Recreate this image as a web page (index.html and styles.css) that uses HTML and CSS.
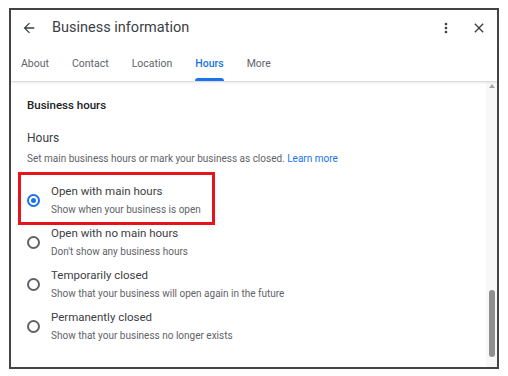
FILE: index.html
```html
<!DOCTYPE html>
<html lang="en">
<head>
    <meta charset="UTF-8">
    <meta name="viewport" content="width=device-width, initial-scale=1.0">
    <title>Business information</title>
    <link rel="stylesheet" href="styles.css">
</head>
<body>
    <div class="dialog">
        <div class="header">
            <button class="icon-btn back" aria-label="Back">
                <svg width="16" height="16" viewBox="0 0 24 24"><path d="M20 11H7.83l5.59-5.59L12 4l-8 8 8 8 1.41-1.41L7.83 13H20v-2z" fill="#3c4043"/></svg>
            </button>
            <div class="title">Business information</div>
            <button class="icon-btn more" aria-label="More options">
                <svg width="16" height="16" viewBox="0 0 24 24"><path d="M12 8c1.1 0 2-.9 2-2s-.9-2-2-2-2 .9-2 2 .9 2 2 2zm0 2c-1.1 0-2 .9-2 2s.9 2 2 2 2-.9 2-2-.9-2-2-2zm0 6c-1.1 0-2 .9-2 2s.9 2 2 2 2-.9 2-2-.9-2-2-2z" fill="#3c4043"/></svg>
            </button>
            <button class="icon-btn close" aria-label="Close">
                <svg width="16" height="16" viewBox="0 0 24 24"><path d="M19 6.41L17.590 5 12 10.59 6.41 5 5 6.41 10.59 12 5 17.59 6.41 19 12 13.41 17.59 19 19 17.59 13.41 12z" fill="#3c4043"/></svg>
            </button>
        </div>
        <div class="tabs">
            <div class="tab">About</div>
            <div class="tab">Contact</div>
            <div class="tab">Location</div>
            <div class="tab active">Hours</div>
            <div class="tab">More</div>
        </div>
        <div class="body">
            <div class="content">
                <div class="section-title">Business hours</div>
                <div class="field-title">Hours</div>
                <div class="desc">Set main business hours or mark your business as closed. <a href="#">Learn more</a></div>
                <div class="options">
                    <div class="option highlighted">
                        <span class="radio checked"></span>
                        <div class="option-text">
                            <div class="option-label">Open with main hours</div>
                            <div class="option-sub">Show when your business is open</div>
                        </div>
                    </div>
                    <div class="option">
                        <span class="radio"></span>
                        <div class="option-text">
                            <div class="option-label">Open with no main hours</div>
                            <div class="option-sub">Don't show any business hours</div>
                        </div>
                    </div>
                    <div class="option">
                        <span class="radio"></span>
                        <div class="option-text">
                            <div class="option-label">Temporarily closed</div>
                            <div class="option-sub">Show that your business will open again in the future</div>
                        </div>
                    </div>
                    <div class="option">
                        <span class="radio"></span>
                        <div class="option-text">
                            <div class="option-label">Permanently closed</div>
                            <div class="option-sub">Show that your business no longer exists</div>
                        </div>
                    </div>
                </div>
            </div>
            <div class="scrollbar">
                <span class="arrow-up"></span>
                <span class="thumb"></span>
            </div>
        </div>
    </div>
</body>
</html>
```

FILE: styles.css
```css
body {
    margin: 0;
    padding: 8px 0 0 9px;
    background: #fff;
    font-family: Roboto, "Noto Sans", Arial, sans-serif;
    color: #3c4043;
}

.dialog {
    width: 486px;
    height: 357px;
    border: 2px solid #444;
    display: flex;
    flex-direction: column;
    background: #fff;
}

.header {
    height: 35px;
    display: flex;
    align-items: center;
    padding: 0 10px 0 10px;
}

.icon-btn {
    width: 16px;
    height: 16px;
    padding: 0;
    border: none;
    background: none;
    display: flex;
    align-items: center;
    justify-content: center;
}

.title {
    flex: 1;
    margin-left: 15px;
    font-size: 14.5px;
    color: #3c4043;
}

.more {
    margin-right: 17px;
}

.tabs {
    height: 36px;
    display: flex;
    padding-left: 10px;
    border-bottom: 1px solid #dadce0;
    box-shadow: 0 1px 2px rgba(0, 0, 0, 0.08);
    position: relative;
    z-index: 1;
}

.tab {
    font-size: 10.5px;
    color: #5f6368;
    display: flex;
    align-items: center;
    margin-right: 23px;
    position: relative;
    padding-top: 1px;
}

.tab.active {
    color: #1a73e8;
    font-weight: 500;
}

.tab.active::after {
    content: "";
    position: absolute;
    left: 0;
    right: 0;
    bottom: 0;
    height: 3px;
    background: #1a73e8;
    border-radius: 3px 3px 0 0;
}

.body {
    flex: 1;
    display: flex;
    min-height: 0;
}

.content {
    flex: 1;
    padding: 13px 0 0 16px;
}

.section-title {
    font-size: 11.5px;
    font-weight: 500;
    line-height: 20px;
    color: #202124;
}

.field-title {
    margin-top: 13px;
    font-size: 12px;
    line-height: 20px;
    color: #3c4043;
}

.desc {
    margin-top: 3px;
    font-size: 10px;
    line-height: 16px;
    color: #5f6368;
}

.desc a {
    color: #1a73e8;
    text-decoration: none;
}

.options {
    margin-top: 15px;
    display: flex;
    flex-direction: column;
    gap: 5px;
}

.option {
    display: flex;
    align-items: center;
    position: relative;
}

.option.highlighted::after {
    content: "";
    position: absolute;
    left: -9px;
    top: -10px;
    width: 191px;
    height: 47px;
    border: 3px solid #e8141c;
}

.radio {
    width: 9px;
    height: 9px;
    border: 2px solid #5f6368;
    border-radius: 50%;
    margin: 0 11px 0 0;
    display: flex;
    align-items: center;
    justify-content: center;
}

.radio.checked {
    border-color: #1a73e8;
}

.radio.checked::before {
    content: "";
    width: 5px;
    height: 5px;
    border-radius: 50%;
    background: #1a73e8;
}

.option-label {
    font-size: 11.5px;
    line-height: 18px;
    color: #3c4043;
}

.option-sub {
    font-size: 10px;
    line-height: 19px;
    color: #5f6368;
}

.scrollbar {
    width: 11px;
    background: #f8f8f8;
    display: flex;
    flex-direction: column;
    align-items: center;
    justify-content: space-between;
    padding: 2px 0 10px 0;
}

.arrow-up {
    width: 0;
    height: 0;
    border-left: 3px solid transparent;
    border-right: 3px solid transparent;
    border-bottom: 4px solid #a3a3a3;
}

.thumb {
    width: 6px;
    height: 67px;
    background: #8f8f8f;
    border-radius: 3px;
}
```
